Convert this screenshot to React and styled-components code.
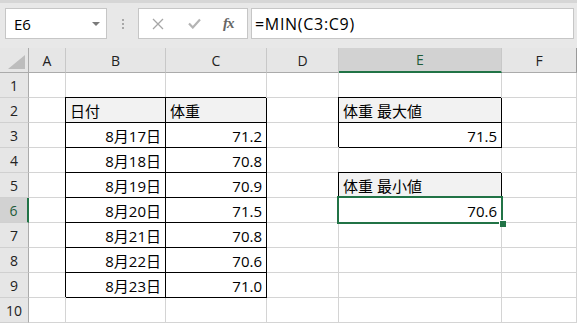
import React from "react";
import styled, { createGlobalStyle } from "styled-components";

const GlobalStyle = createGlobalStyle`
    html, body {
        margin: 0;
        padding: 0;
        background: #ffffff;
    }
    body {
        font-family: "Open Sans", "Noto Sans CJK JP", sans-serif;
        color: #000000;
        overflow: hidden;
    }
`;

const GREEN = "#217346";

const Window = styled.div`
    width: 577px;
    height: 324px;
    overflow: hidden;
    background: #ffffff;
`;

const Toolbar = styled.div`
    height: 48px;
    box-sizing: border-box;
    display: flex;
    align-items: flex-start;
    padding: 5px 3px 0 5px;
    background: #e8e8e8;
    border-top: 3px solid #d6d6d6;
`;

const NameBox = styled.div`
    width: 102px;
    height: 31px;
    box-sizing: border-box;
    display: flex;
    align-items: center;
    justify-content: space-between;
    padding: 0 6px 0 8px;
    background: #ffffff;
    border: 1px solid #c6c6c6;
    font-size: 15px;
`;

const DropArrow = styled.span`
    width: 0;
    height: 0;
    border-left: 4px solid transparent;
    border-right: 4px solid transparent;
    border-top: 4px solid #7a7a7a;
`;

const Grip = styled.div`
    width: 31px;
    height: 31px;
    display: flex;
    flex-direction: column;
    align-items: center;
    justify-content: center;
    gap: 2px;

    span {
        width: 2px;
        height: 2px;
        background: #a8a8a8;
    }
`;

const FormulaButtons = styled.div`
    width: 110px;
    height: 31px;
    box-sizing: border-box;
    display: flex;
    align-items: center;
    padding: 0 0 0 13px;
    background: #ffffff;
    border: 1px solid #c6c6c6;
    margin-right: 3px;
`;

const ToolIcon = styled.span`
    width: 36px;
    display: flex;
    align-items: center;
    justify-content: flex-start;
`;

const Fx = styled.span`
    font-family: "Liberation Serif", "DejaVu Serif", serif;
    font-style: italic;
    font-weight: bold;
    font-size: 15px;
    color: #666666;
    letter-spacing: -1px;
    margin-left: -1px;
`;

const FormulaInput = styled.div`
    flex: 1;
    height: 31px;
    box-sizing: border-box;
    display: flex;
    align-items: center;
    padding-left: 3px;
    background: #ffffff;
    border: 1px solid #c6c6c6;
    font-size: 16px;
    letter-spacing: 0.7px;
`;

const Sheet = styled.div`
    display: grid;
    grid-template-columns: 29px 37px 100px 101px 72px 163px 75px;
    grid-auto-rows: 25px;
`;

const Corner = styled.div`
    box-sizing: border-box;
    background: #e6e6e6;
    border-right: 1px solid #ababab;
    border-bottom: 1px solid #ababab;
    display: flex;
    align-items: flex-end;
    justify-content: flex-end;
    padding: 0 3px 3px 0;
`;

const ColHead = styled.div`
    box-sizing: border-box;
    display: flex;
    align-items: center;
    justify-content: center;
    font-size: 14px;
    background: ${(p) => (p.$active ? "#d2d2d2" : "#e6e6e6")};
    color: ${(p) => (p.$active ? "#1f5c3a" : "#222222")};
    border-right: 1px solid ${(p) => (p.$last ? "#9a9a9a" : "#c8c8c8")};
    border-bottom: ${(p) => (p.$active ? `2px solid ${GREEN}` : "1px solid #ababab")};
`;

const RowHead = styled.div`
    box-sizing: border-box;
    display: flex;
    align-items: center;
    justify-content: center;
    font-size: 14px;
    background: ${(p) => (p.$active ? "#d2d2d2" : "#e6e6e6")};
    color: ${(p) => (p.$active ? "#1f5c3a" : "#222222")};
    border-right: ${(p) => (p.$active ? `2px solid ${GREEN}` : "1px solid #ababab")};
    border-bottom: 1px solid #d0d0d0;
`;

const Cell = styled.div`
    position: relative;
    box-sizing: border-box;
    display: flex;
    align-items: center;
    justify-content: ${(p) => (p.$align === "right" ? "flex-end" : "flex-start")};
    padding: 1px 4px 0 4px;
    font-size: 15px;
    white-space: nowrap;
    background: ${(p) => (p.$head ? "#f2f2f2" : "#ffffff")};
    border-right: 1px solid ${(p) => (p.$boxed ? "#000000" : "#d4d4d4")};
    border-bottom: 1px solid ${(p) => (p.$boxed ? "#000000" : "#d4d4d4")};
    box-shadow: ${(p) => (p.$boxed ? "-1px -1px 0 #000000" : "none")};
`;

const Selection = styled.div`
    position: absolute;
    left: -2px;
    top: -2px;
    right: -2px;
    bottom: -2px;
    border: 2px solid ${GREEN};
    z-index: 2;
    pointer-events: none;
`;

const FillHandle = styled.div`
    position: absolute;
    right: -5px;
    bottom: -5px;
    width: 6px;
    height: 6px;
    background: ${GREEN};
    border-left: 1px solid #ffffff;
    border-top: 1px solid #ffffff;
`;

const columns = ["A", "B", "C", "D", "E", "F"];

const table = [
    ["8月17日", "71.2"],
    ["8月18日", "70.8"],
    ["8月19日", "70.9"],
    ["8月20日", "71.5"],
    ["8月21日", "70.8"],
    ["8月22日", "70.6"],
    ["8月23日", "71.0"],
];

// rows 1..10, each an object keyed by column letter
function buildRows() {
    const rows = [];
    for (let r = 1; r <= 10; r++) {
        rows.push({});
    }
    rows[1].B = { text: "日付", head: true, boxed: true };
    rows[1].C = { text: "体重", head: true, boxed: true };
    table.forEach(([date, weight], i) => {
        rows[i + 2].B = { text: date, align: "right", boxed: true };
        rows[i + 2].C = { text: weight, align: "right", boxed: true };
    });
    rows[1].E = { text: "体重 最大値", head: true, boxed: true };
    rows[2].E = { text: "71.5", align: "right", boxed: true };
    rows[4].E = { text: "体重 最小値", head: true, boxed: true };
    rows[5].E = { text: "70.6", align: "right", boxed: true, selected: true };
    return rows;
}

const rows = buildRows();

function App() {
    return (
        <Window>
            <GlobalStyle />
            <Toolbar>
                <NameBox>
                    <span>E6</span>
                    <DropArrow />
                </NameBox>
                <Grip>
                    <span />
                    <span />
                    <span />
                </Grip>
                <FormulaButtons>
                    <ToolIcon>
                        <svg width="12" height="12" viewBox="0 0 12 12">
                            <path
                                d="M1 1 L11 11 M11 1 L1 11"
                                stroke="#a6a6a6"
                                strokeWidth="1.3"
                                fill="none"
                            />
                        </svg>
                    </ToolIcon>
                    <ToolIcon>
                        <svg width="13" height="11" viewBox="0 0 13 11">
                            <path
                                d="M1 5.5 L4.8 9.5 L12 1.5"
                                stroke="#b4b4b4"
                                strokeWidth="2.2"
                                fill="none"
                            />
                        </svg>
                    </ToolIcon>
                    <Fx>fx</Fx>
                </FormulaButtons>
                <FormulaInput>=MIN(C3:C9)</FormulaInput>
            </Toolbar>
            <Sheet>
                <Corner>
                    <svg width="17" height="14" viewBox="0 0 17 14">
                        <path d="M17 0 L17 14 L0 14 Z" fill="#bdbdbd" />
                    </svg>
                </Corner>
                {columns.map((c, i) => (
                    <ColHead
                        key={c}
                        $active={c === "E"}
                        $last={i === columns.length - 1}
                    >
                        {c}
                    </ColHead>
                ))}
                {rows.map((row, r) => (
                    <React.Fragment key={r}>
                        <RowHead $active={r === 5}>{r + 1}</RowHead>
                        {columns.map((c) => {
                            const cell = row[c];
                            return (
                                <Cell
                                    key={c}
                                    $align={cell && cell.align}
                                    $head={cell && cell.head}
                                    $boxed={cell && cell.boxed}
                                >
                                    {cell && cell.text}
                                    {cell && cell.selected && (
                                        <Selection>
                                            <FillHandle />
                                        </Selection>
                                    )}
                                </Cell>
                            );
                        })}
                    </React.Fragment>
                ))}
            </Sheet>
        </Window>
    );
}

export default App;
